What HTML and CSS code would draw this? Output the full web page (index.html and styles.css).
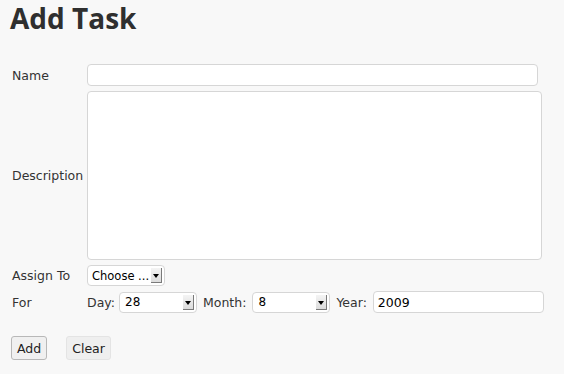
FILE: index.html
```html
<!DOCTYPE html>
<html lang="en">
<head>
    <meta charset="UTF-8">
    <title>Add Task</title>
    <link rel="stylesheet" href="styles.css">
</head>
<body>
    <h1>Add Task</h1>

    <form class="task-form" onsubmit="return false;">
        <div class="rows">
            <label class="label" for="name">Name</label>
            <input type="text" id="name" class="text name-input">

            <label class="label" for="desc">Description</label>
            <textarea id="desc" class="text desc-input"></textarea>

            <label class="label" for="assign">Assign To</label>
            <span class="select assign">
                <select id="assign"><option>Choose ...</option></select>
                <span class="arrow"></span>
            </span>

            <span class="label">For</span>
            <div class="date-row">
                <span class="part">Day:</span>
                <span class="select day">
                    <select><option>28</option></select>
                    <span class="arrow"></span>
                </span>
                <span class="part">Month:</span>
                <span class="select month">
                    <select><option>8</option></select>
                    <span class="arrow"></span>
                </span>
                <span class="part">Year:</span>
                <input type="text" class="text year-input" value="2009">
            </div>
        </div>

        <div class="buttons">
            <button class="btn add">Add</button>
            <button class="btn clear">Clear</button>
        </div>
    </form>
</body>
</html>
```

FILE: styles.css
```css
/* Page */
body {
    margin: 0;
    padding: 0 10px;
    background-color: #f8f8f8;
    color: #333;
    font-family: "DejaVu Sans", Verdana, sans-serif;
    font-size: 12.5px;
}

h1 {
    margin: 0;
    font-family: "Open Sans", sans-serif;
    font-size: 28px;
    font-weight: bold;
    line-height: 36px;
    color: #2f2f2f;
}

.task-form {
    margin-top: 28px;
    padding-left: 2px;
}

.rows {
    display: grid;
    grid-template-columns: 75px auto;
    row-gap: 5px;
    align-items: center;
    justify-items: start;
}

.label {
    color: #333;
}

/* Text fields */
.text {
    box-sizing: border-box;
    margin: 0;
    border: 1px solid #d6d6d6;
    border-radius: 4px;
    background-color: #fff;
    font-family: "DejaVu Sans", Verdana, sans-serif;
    font-size: 12.5px;
    color: #000;
    padding: 0 4px;
    outline: none;
}

.name-input {
    width: 451px;
    height: 22px;
}

.desc-input {
    width: 455px;
    height: 169px;
    resize: none;
}

.year-input {
    width: 171px;
    height: 22px;
}

/* Selects */
.select {
    position: relative;
    display: inline-block;
}

.select select {
    appearance: none;
    -webkit-appearance: none;
    box-sizing: border-box;
    margin: 0;
    height: 21px;
    padding: 0 5px;
    border: 1px solid #d6d6d6;
    border-radius: 4px;
    background-color: #fff;
    font-family: "DejaVu Sans", Verdana, sans-serif;
    font-size: 12px;
    color: #000;
}

.assign select {
    width: 78px;
    padding: 0 4px;
    font-size: 11.5px;
}

.day select,
.month select { width: 78px; }

.arrow {
    position: absolute;
    right: 3px;
    top: 3px;
    width: 10px;
    height: 14px;
    background: linear-gradient(#f4f4f4, #dcdcdc);
    border-right: 1px solid #7a7a7a;
    border-bottom: 1px solid #7a7a7a;
    pointer-events: none;
}

.arrow::after {
    content: "";
    position: absolute;
    left: 2px;
    top: 6px;
    border-left: 3px solid transparent;
    border-right: 3px solid transparent;
    border-top: 4px solid #000;
}

/* Date row */
.date-row {
    display: flex;
    align-items: center;
}

.part {
    color: #333;
    margin-right: 5px;
}

.day { margin-left: -1px; margin-right: 6px; }
.month { margin-left: 1px; margin-right: 6px; }
.year-input { margin-left: 1px; }

/* Buttons */
.buttons {
    display: flex;
    gap: 19px;
    margin-top: 23px;
    margin-left: -1px;
}

.btn {
    height: 24px;
    padding: 0 5px;
    font-family: "DejaVu Sans", Verdana, sans-serif;
    font-size: 12.5px;
    color: #222;
    border-radius: 3px;
    cursor: pointer;
}

.add {
    background-color: #f0f0f0;
    border: 1px solid #b8b8b8;
}

.clear {
    background-color: #efefef;
    border: 1px solid #e4e4e4;
}
```
